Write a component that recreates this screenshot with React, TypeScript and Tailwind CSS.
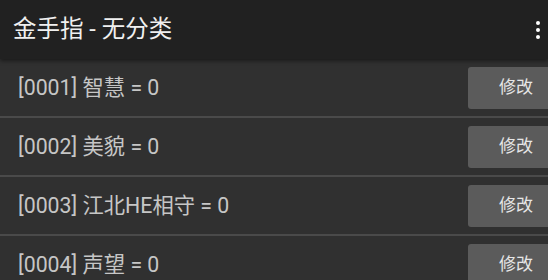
import React from "react";

const cheats = [
  { id: "0001", name: "智慧", value: 0 },
  { id: "0002", name: "美貌", value: 0 },
  { id: "0003", name: "江北HE相守", value: 0 },
  { id: "0004", name: "声望", value: 0 },
];

const font = { fontFamily: "Roboto, 'Noto Sans CJK SC', sans-serif" };

export default function App() {
  return (
    <div className="h-[280px] w-[548px] overflow-hidden bg-[#303030]" style={font}>
      <div className="relative z-10 flex h-[59px] items-center justify-between bg-[#212121] pl-[13px] pr-[4px] shadow-[0_2px_4px_rgba(0,0,0,0.45)]">
        <h1 className="text-[23.5px] text-[#f0f0f0]">金手指 - 无分类</h1>
        <div className="flex w-[12px] flex-col items-center gap-[3px]">
          <span className="h-[4px] w-[4px] rounded-full bg-white" />
          <span className="h-[4px] w-[4px] rounded-full bg-white" />
          <span className="h-[4px] w-[4px] rounded-full bg-white" />
        </div>
      </div>
      <div className="flex flex-col">
        {cheats.map((c) => (
          <div key={c.id} className="flex h-[59px] items-center justify-between border-b-2 border-[#4a4a4a] pl-[18px]">
            <span className="text-[21.3px] text-[#c6c6c6]">
              [{c.id}] {c.name} = {c.value}
            </span>
            <button className="mr-[-16px] flex h-[42px] w-[96px] shrink-0 items-center justify-center rounded-[3px] bg-[#5b5b5b] text-[17px] text-[#e6e6e6]">
              修改
            </button>
          </div>
        ))}
      </div>
    </div>
  );
}
